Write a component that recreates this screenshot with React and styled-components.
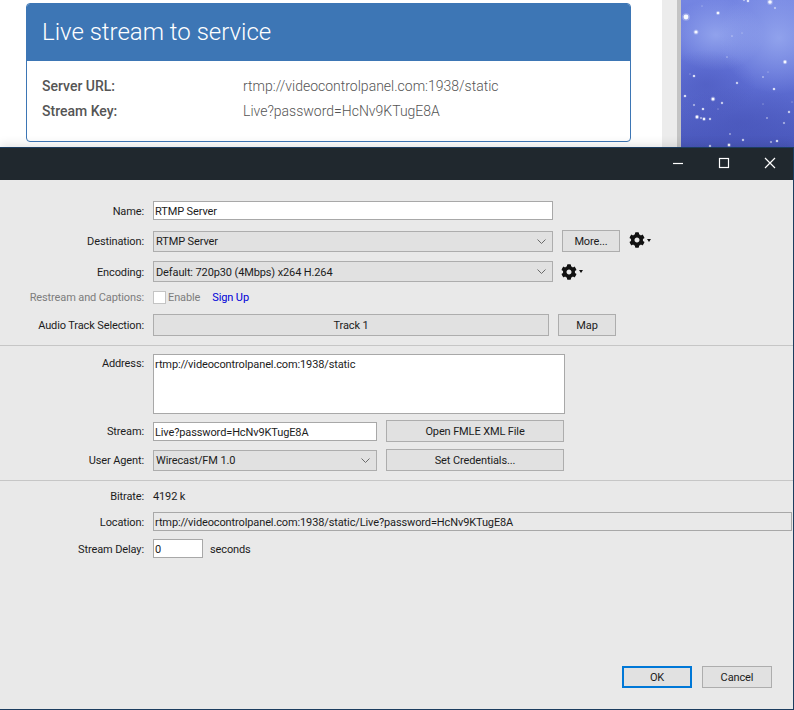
import React from "react"
import styled, { createGlobalStyle, css } from "styled-components"
import { FaCog } from "react-icons/fa"

const GlobalStyle = createGlobalStyle`
  html, body {
    margin: 0;
    padding: 0;
    background: #e9e9e9;
  }
  * {
    box-sizing: border-box;
  }
`

const Page = styled.div`
  width: 794px;
  height: 710px;
  display: flex;
  flex-direction: column;
  overflow: hidden;
`

const Browser = styled.div`
  height: 147px;
  flex: none;
  display: flex;
  background: #fff;
`

const Content = styled.div`
  width: 662px;
  padding: 3px 31px 0 26px;
`

const Scrollbar = styled.div`
  width: 15px;
  background: #ececec;
`

const ScrollEdge = styled.div`
  width: 4px;
  background: #c4c4c4;
`

const Sky = styled.svg`
  width: 113px;
  height: 147px;
  display: block;
`

const Card = styled.div`
  height: 139px;
  border: 1px solid #3d76b5;
  border-radius: 4px;
  overflow: hidden;
`

const CardHeader = styled.div`
  height: 57px;
  background: #3d76b5;
  color: #fff;
  font: 300 24px/56px Roboto, sans-serif;
  padding-left: 15px;
`

const CardBody = styled.div`
  padding: 13px 15px 0;
  font: 300 14px/25px Roboto, sans-serif;
  color: #555;
`

const CardRow = styled.div`
  display: flex;
`

const CardKey = styled.div`
  width: 201px;
  font-weight: 500;
`

const Dialog = styled.div`
  flex: 1;
  position: relative;
  display: flex;
  flex-direction: column;
  border-top: 1px solid #1c3d5f;
  border-right: 1px solid #1c3d5f;
  border-bottom: 1px solid #1c3d5f;
  background: #e9e9e9;
  box-shadow: 0 -3px 9px rgba(0, 0, 0, 0.1);
  font: 11px/16px Roboto, "Open Sans", sans-serif;
  letter-spacing: -0.12px;
  color: #1c1c1c;
`

const TitleBar = styled.div`
  height: 32px;
  flex: none;
  background: #20282e;
  display: flex;
  justify-content: flex-end;
  align-items: center;
`

const WindowButton = styled.svg`
  width: 46px;
  height: 32px;
  display: block;
  stroke: #fff;
  stroke-width: 1.2;
  fill: none;
`

const Form = styled.div`
  flex: 1;
  display: flex;
  flex-direction: column;
  padding-top: 21px;
`

const Row = styled.div`
  display: flex;
  align-items: ${props => props.$align || "center"};
  margin-top: ${props => props.$top || 0}px;
`

const plainText = css`
  padding-top: 2px;
  line-height: 14px;
`

const Label = styled.div`
  ${plainText}
  width: 144px;
  flex: none;
  margin-right: 9px;
  padding-top: ${props => props.$pad || 2}px;
  text-align: right;
  color: ${props => (props.$disabled ? "#7d7d7d" : "inherit")};
`

const Field = styled.div`
  width: ${props => props.$width}px;
  height: ${props => props.$height || 19}px;
  flex: none;
  padding: 1px 1px;
  line-height: 17px;
  background: ${props => (props.$readOnly ? "#e9e9e9" : "#fff")};
  border: 1px solid #a8a8a8;
  white-space: nowrap;
`

const Select = styled.div`
  width: ${props => props.$width}px;
  height: 21px;
  flex: none;
  display: flex;
  align-items: center;
  justify-content: space-between;
  padding: 2px 6px 0 2px;
  background: #e1e1e1;
  border: 1px solid #adadad;
`

const Chevron = styled.svg`
  width: 9px;
  height: 5px;
  margin-top: -2px;
  display: block;
  fill: none;
  stroke: #6a6a6a;
`

const Button = styled.div`
  width: ${props => props.$width}px;
  height: 22px;
  flex: none;
  margin-left: ${props => props.$left || 0}px;
  padding-top: 2px;
  display: flex;
  align-items: center;
  justify-content: center;
  background: #e1e1e1;
  border: ${props => (props.$primary ? "2px solid #0078d7" : "1px solid #adadad")};
`

const GearMenu = styled.div`
  margin-left: ${props => props.$left}px;
  margin-top: ${props => props.$top || 0}px;
  display: flex;
  align-items: center;
  color: #111;
  font-size: 16px;

  svg {
    display: block;
  }
`

const Caret = styled.span`
  margin-left: 2px;
  border-left: 2.5px solid transparent;
  border-right: 2.5px solid transparent;
  border-top: 3px solid #111;
`

const Checkbox = styled.div`
  width: 13px;
  height: 13px;
  flex: none;
  background: #fff;
  border: 1px solid #c4c4c4;
`

const CheckText = styled.span`
  ${plainText}
  margin-left: 2px;
  color: #7d7d7d;
`

const SignUp = styled.span`
  ${plainText}
  margin-left: 12px;
  color: #0000d8;
`

const Divider = styled.div`
  height: 1px;
  background: #c6c6c6;
  margin-top: ${props => props.$top}px;
  margin-bottom: ${props => props.$bottom}px;
`

const Value = styled.span`
  ${plainText}
`

const Unit = styled.span`
  ${plainText}
  margin-left: 7px;
`

const Footer = styled.div`
  margin-top: auto;
  display: flex;
  justify-content: flex-end;
  gap: 10px;
  padding: 0 21px 21px 0;
`

const stars = [
  [5, 17, 2.4], [15, 32, 1.6], [89, 2, 1.8], [37, 13, 1.3], [104, 62, 1.4],
  [32, 99, 1.5], [13, 76, 1], [56, 83, 0.9], [93, 89, 1], [4, 96, 1],
  [13, 105, 0.8], [22, 109, 1], [16, 117, 1.4], [20, 118, 0.8], [23, 119, 1.2],
  [29, 119, 0.9], [86, 118, 0.7], [103, 123, 0.8], [108, 112, 0.9], [41, 103, 0.9],
  [49, 134, 0.7], [62, 140, 0.9], [90, 142, 0.8], [96, 141, 1], [48, 145, 1.2],
  [29, 146, 0.9], [51, 36, 0.6], [61, 33, 0.5], [94, 8, 0.8], [21, 6, 0.5],
  [82, 77, 0.7], [87, 72, 0.5], [46, 57, 0.6], [9, 74, 0.5], [37, 109, 0.5],
  [82, 104, 0.5], [111, 102, 0.5], [63, 0, 0.8], [67, 1, 1],
]

const StarField = () => (
  <Sky viewBox="0 0 113 147">
    <defs>
      <linearGradient id="base" x1="0" y1="0" x2="0" y2="1">
        <stop offset="0" stopColor="#7485e2" />
        <stop offset="0.5" stopColor="#6070d6" />
        <stop offset="1" stopColor="#4a58bc" />
      </linearGradient>
      <radialGradient id="glow">
        <stop offset="0" stopColor="#9dafF2" stopOpacity="0.75" />
        <stop offset="1" stopColor="#9dafF2" stopOpacity="0" />
      </radialGradient>
      <radialGradient id="shade">
        <stop offset="0" stopColor="#4450b4" stopOpacity="0.4" />
        <stop offset="1" stopColor="#4450b4" stopOpacity="0" />
      </radialGradient>
    </defs>
    <rect width="113" height="147" fill="url(#base)" />
    <ellipse cx="35" cy="35" rx="48" ry="36" fill="url(#glow)" />
    <ellipse cx="98" cy="38" rx="60" ry="56" fill="url(#glow)" />
    <ellipse cx="25" cy="84" rx="50" ry="34" fill="url(#shade)" />
    <ellipse cx="60" cy="122" rx="70" ry="36" fill="url(#shade)" />
    {stars.map(([x, y, r]) => (
      <g key={`${x}-${y}`} opacity={Math.min(1, r)}>
        <circle cx={x} cy={y} r={r * 1.6} fill="#fff" opacity="0.25" />
        <circle cx={x} cy={y} r={r} fill="#f6f8ff" />
      </g>
    ))}
  </Sky>
)

const Gear = ({ left, top }) => (
  <GearMenu $left={left} $top={top}>
    <FaCog />
    <Caret />
  </GearMenu>
)

const Arrow = () => (
  <Chevron viewBox="0 0 9 5">
    <path d="M0.5 0.5 L4.5 4.5 L8.5 0.5" />
  </Chevron>
)

const App = () => (
  <Page>
    <GlobalStyle />
    <Browser>
      <Content>
        <Card>
          <CardHeader>Live stream to service</CardHeader>
          <CardBody>
            <CardRow>
              <CardKey>Server URL:</CardKey>
              rtmp://videocontrolpanel.com:1938/static
            </CardRow>
            <CardRow>
              <CardKey>Stream Key:</CardKey>
              Live?password=HcNv9KTugE8A
            </CardRow>
          </CardBody>
        </Card>
      </Content>
      <Scrollbar />
      <ScrollEdge />
      <StarField />
    </Browser>
    <Dialog>
      <TitleBar>
        <WindowButton viewBox="0 0 46 32">
          <path d="M18 15.5 H28" />
        </WindowButton>
        <WindowButton viewBox="0 0 46 32">
          <rect x="18.5" y="10.5" width="9" height="9" />
        </WindowButton>
        <WindowButton viewBox="0 0 46 32">
          <path d="M18 10 L28 20 M28 10 L18 20" />
        </WindowButton>
      </TitleBar>
      <Form>
        <Row>
          <Label>Name:</Label>
          <Field $width={400}>RTMP Server</Field>
        </Row>
        <Row $top={10}>
          <Label>Destination:</Label>
          <Select $width={400}>
            RTMP Server
            <Arrow />
          </Select>
          <Button $width={58} $left={9}>More...</Button>
          <Gear left={9} top={-2} />
        </Row>
        <Row $top={9}>
          <Label>Encoding:</Label>
          <Select $width={400}>
            Default: 720p30 (4Mbps) x264 H.264
            <Arrow />
          </Select>
          <Gear left={8} />
        </Row>
        <Row $top={7}>
          <Label $disabled>Restream and Captions:</Label>
          <Checkbox />
          <CheckText>Enable</CheckText>
          <SignUp>Sign Up</SignUp>
        </Row>
        <Row $top={9}>
          <Label>Audio Track Selection:</Label>
          <Button $width={396}>Track 1</Button>
          <Button $width={58} $left={9}>Map</Button>
        </Row>
        <Divider $top={9} $bottom={8} />
        <Row $align="flex-start">
          <Label $pad={3}>Address:</Label>
          <Field $width={412} $height={60}>rtmp://videocontrolpanel.com:1938/static</Field>
        </Row>
        <Row $top={6}>
          <Label>Stream:</Label>
          <Field $width={224}>Live?password=HcNv9KTugE8A</Field>
          <Button $width={178} $left={9}>Open FMLE XML File</Button>
        </Row>
        <Row $top={7}>
          <Label>User Agent:</Label>
          <Select $width={224}>
            Wirecast/FM 1.0
            <Arrow />
          </Select>
          <Button $width={178} $left={9}>Set Credentials...</Button>
        </Row>
        <Divider $top={9} $bottom={7} />
        <Row>
          <Label>Bitrate:</Label>
          <Value>4192 k</Value>
        </Row>
        <Row $top={8}>
          <Label>Location:</Label>
          <Field $width={639} $readOnly>rtmp://videocontrolpanel.com:1938/static/Live?password=HcNv9KTugE8A</Field>
        </Row>
        <Row $top={8}>
          <Label>Stream Delay:</Label>
          <Field $width={50}>0</Field>
          <Unit>seconds</Unit>
        </Row>
        <Footer>
          <Button $width={70} $primary>OK</Button>
          <Button $width={70}>Cancel</Button>
        </Footer>
      </Form>
    </Dialog>
  </Page>
)

export default App
